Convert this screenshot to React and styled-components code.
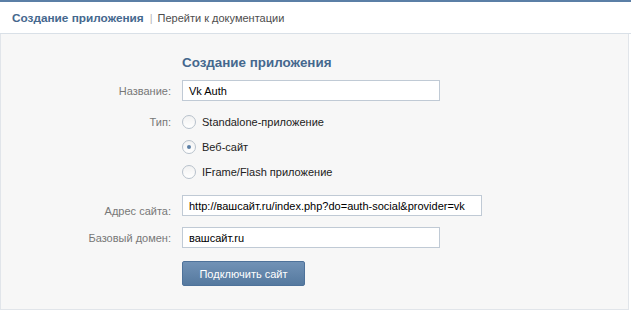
import styled, { createGlobalStyle } from "styled-components";

const Global = createGlobalStyle`
    body {
        margin: 0;
        background: #fff;
        font-family: Tahoma, "Liberation Sans", "DejaVu Sans", sans-serif;
        font-size: 11px;
    }
`;

const Page = styled.div`
    width: 631px;
    height: 313px;
    border-top: 2px solid #5b7fa6;
    box-sizing: border-box;
`;

const Tabs = styled.div`
    height: 31px;
    display: flex;
    align-items: center;
    padding: 0 12px;
    border-bottom: 1px solid #d9e0e7;
    background: #fff;
    font-size: 11px;
`;

const ActiveTab = styled.span`
    color: #45688e;
    font-weight: bold;
    font-size: 11.8px;
`;

const Sep = styled.span`
    color: #b5b5b5;
    margin: 0 5px 0 6px;
`;

const TabLink = styled.span`
    color: #4d4d4d;
`;

const Panel = styled.div`
    width: 629px;
    height: 276px;
    box-sizing: border-box;
    background: #f7f7f7;
    border: 1px solid #e1e5ea;
    border-top: none;
    padding-top: 18px;
`;

const Form = styled.div`
    display: grid;
    grid-template-columns: 170px 1fr;
    column-gap: 11px;
    align-items: center;
`;

const Title = styled.div`
    grid-column: 2;
    color: #45688e;
    font-weight: bold;
    font-size: 13.4px;
    line-height: 22px;
    margin-bottom: 6px;
`;

const Label = styled.div`
    grid-column: 1;
    text-align: right;
    color: #777;
    font-size: 11px;
    align-self: ${(p) => (p.$top ? "start" : "center")};
    line-height: ${(p) => (p.$top ? "14px" : "normal")};
    padding-top: ${(p) => (p.$top ? "14px" : "0")};
`;

const Input = styled.div`
    grid-column: 2;
    width: ${(p) => p.$w}px;
    height: 21px;
    box-sizing: border-box;
    border: 1px solid #c0cad5;
    background: #fff;
    padding: 0 6px;
    display: flex;
    align-items: center;
    white-space: nowrap;
    font-size: 11px;
    color: #000;
    margin-bottom: ${(p) => p.$mb || 0}px;
`;

const Radios = styled.div`
    grid-column: 2;
    display: flex;
    flex-direction: column;
    gap: 11px;
    margin: 14px 0 16px;
`;

const RadioRow = styled.div`
    display: flex;
    align-items: center;
    height: 14px;
    color: #222;
    font-size: 11px;
`;

const Circle = styled.span`
    width: 12px;
    height: 12px;
    border-radius: 50%;
    border: 1px solid #b8c2cc;
    background: linear-gradient(#f2f2f2, #fff);
    margin-right: 6px;
    display: flex;
    align-items: center;
    justify-content: center;
    &::after {
        content: "";
        width: 4px;
        height: 4px;
        border-radius: 50%;
        background: ${(p) => (p.$on ? "#5b7fa6" : "transparent")};
    }
`;

const Button = styled.button`
    grid-column: 2;
    justify-self: start;
    width: 123px;
    height: 25px;
    margin-top: 13px;
    border: 1px solid #4e729a;
    border-radius: 2px;
    background: linear-gradient(#7192b6, #55799f);
    color: #fff;
    font-family: inherit;
    font-size: 11px;
    padding: 0;
`;

const Radio = ({ on, children }) => (
    <RadioRow>
        <Circle $on={on} />
        {children}
    </RadioRow>
);

export default function App() {
    return (
        <Page>
            <Global />
            <Tabs>
                <ActiveTab>Создание приложения</ActiveTab>
                <Sep>|</Sep>
                <TabLink>Перейти к документации</TabLink>
            </Tabs>
            <Panel>
                <Form>
                    <Title>Создание приложения</Title>
                    <Label>Название:</Label>
                    <Input $w={258}>Vk Auth</Input>
                    <Label $top>Тип:</Label>
                    <Radios>
                        <Radio>Standalone-приложение</Radio>
                        <Radio on>Веб-сайт</Radio>
                        <Radio>IFrame/Flash приложение</Radio>
                    </Radios>
                    <Label>Адрес сайта:</Label>
                    <Input $w={300} $mb={11}>
                        http://вашсайт.ru/index.php?do=auth-social&amp;provider=vk
                    </Input>
                    <Label>Базовый домен:</Label>
                    <Input $w={258}>вашсайт.ru</Input>
                    <Button>Подключить сайт</Button>
                </Form>
            </Panel>
        </Page>
    );
}
